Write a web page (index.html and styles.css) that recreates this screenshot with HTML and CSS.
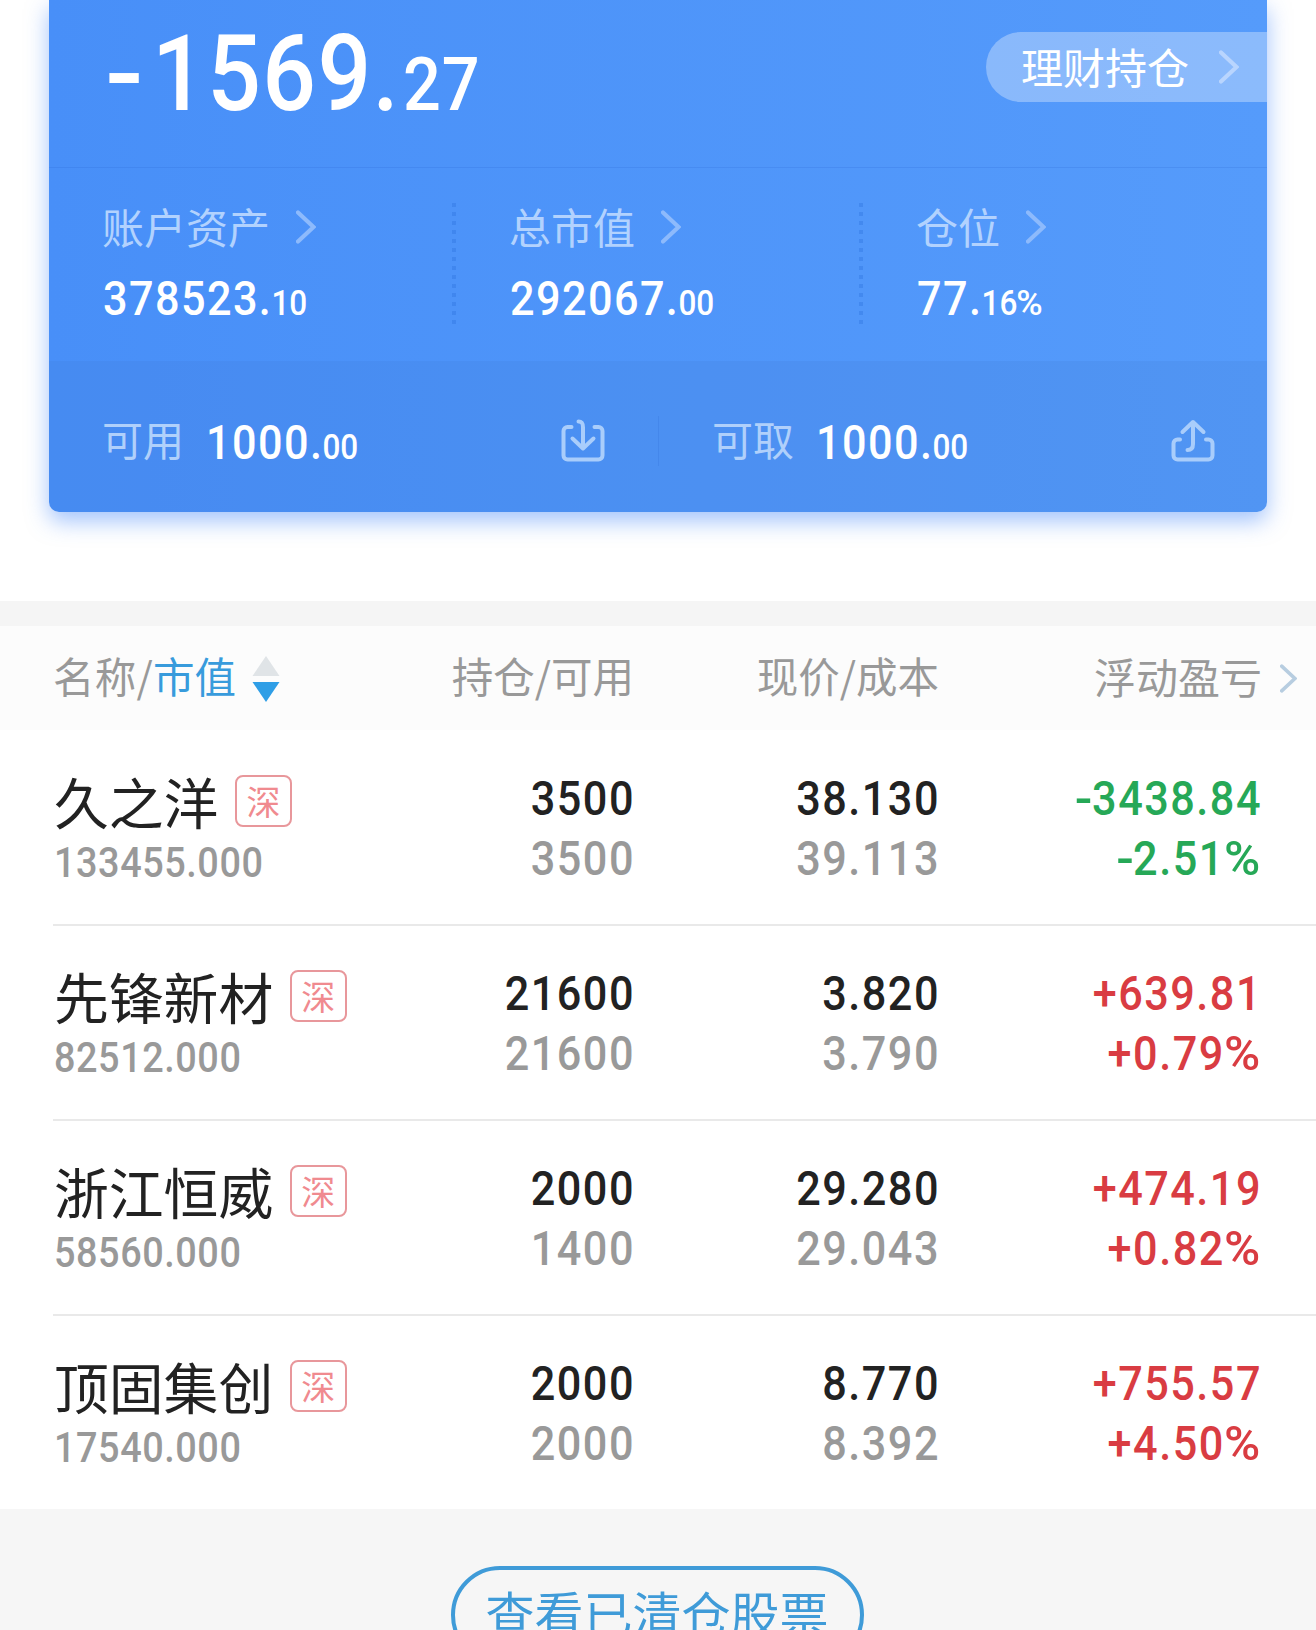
FILE: index.html
```html
<!DOCTYPE html>
<html lang="zh-CN">
<head>
<meta charset="utf-8">
<title>持仓</title>
<link rel="stylesheet" href="styles.css">
</head>
<body>
<svg class="defs" aria-hidden="true">
  <symbol id="chev" viewBox="0 0 20 34"><path d="M2 2.500L17.500 17L2 31.500" fill="none" stroke="currentColor" stroke-width="4.200" stroke-linecap="round" stroke-linejoin="miter"/></symbol>
</svg>
<main class="page">
  <section class="card">
    <div class="profit">
      <div class="num big"><span class="sign">-</span>1569.<span class="dec">27</span></div>
      <a class="pill"><span>理财持仓</span><svg class="chev"><use href="#chev"/></svg></a>
    </div>
    <div class="stats">
      <div class="stat">
        <div class="label"><span>账户资产</span><svg class="chev"><use href="#chev"/></svg></div>
        <div class="num val">378523.<span class="dec">10</span></div>
      </div>
      <div class="stat dotted">
        <div class="label"><span>总市值</span><svg class="chev"><use href="#chev"/></svg></div>
        <div class="num val">292067.<span class="dec">00</span></div>
      </div>
      <div class="stat dotted">
        <div class="label"><span>仓位</span><svg class="chev"><use href="#chev"/></svg></div>
        <div class="num val">77.<span class="dec">16<span class="pct">%</span></span></div>
      </div>
    </div>
    <div class="cash">
      <div class="cash-item">
        <span class="cash-label">可用</span><span class="num val">1000.<span class="dec">00</span></span>
        <svg class="io" viewBox="0 0 44 44"><path d="M10.500 8H6.500a4 4 0 0 0-4 4V36.500a4 4 0 0 0 4 4H37.500a4 4 0 0 0 4-4V12a4 4 0 0 0-4-4H33.500M17.500 2.500c4 0 4.500 2.500 4.500 6V29M11.500 19.500L22 29.500L32.500 19.500"/></svg>
      </div>
      <div class="cash-item second">
        <span class="cash-label">可取</span><span class="num val">1000.<span class="dec">00</span></span>
        <svg class="io" viewBox="0 0 44 44"><path d="M9 20.500H6.500a4 4 0 0 0-4 4V36.500a4 4 0 0 0 4 4H37.500a4 4 0 0 0 4-4V24.500a4 4 0 0 0-4-4H35M16.500 31c4 0 5.500-2 5.500-6V3M11.500 13L22 3L32.500 13"/></svg>
      </div>
    </div>
  </section>

  <section class="holdings">
    <div class="head">
      <div class="h-name"><span>名称/<b>市值</b></span><svg class="sort" viewBox="0 0 28 46"><path d="M14 0L27.500 20H.5z" fill="#e0e4e7"/><path d="M14 46L27.500 26H.5z" fill="#2f9ee6"/></svg></div>
      <div class="h-col">持仓/可用</div>
      <div class="h-col">现价/成本</div>
      <div class="h-col last"><span>浮动盈亏</span><svg class="chev"><use href="#chev"/></svg></div>
    </div>
    <div class="row">
      <div class="name"><div class="title">久之洋<span class="tag">深</span></div><div class="num mv">133455.000</div></div>
      <div class="num col"><span>3500</span><span class="dim">3500</span></div>
      <div class="num col"><span>38.130</span><span class="dim">39.113</span></div>
      <div class="num col down"><span><span class="sign">-</span>3438.84</span><span><span class="sign">-</span>2.51<span class="pct">%</span></span></div>
    </div>
    <div class="row">
      <div class="name"><div class="title">先锋新材<span class="tag">深</span></div><div class="num mv">82512.000</div></div>
      <div class="num col"><span>21600</span><span class="dim">21600</span></div>
      <div class="num col"><span>3.820</span><span class="dim">3.790</span></div>
      <div class="num col up"><span>+639.81</span><span>+0.79<span class="pct">%</span></span></div>
    </div>
    <div class="row">
      <div class="name"><div class="title">浙江恒威<span class="tag">深</span></div><div class="num mv">58560.000</div></div>
      <div class="num col"><span>2000</span><span class="dim">1400</span></div>
      <div class="num col"><span>29.280</span><span class="dim">29.043</span></div>
      <div class="num col up"><span>+474.19</span><span>+0.82<span class="pct">%</span></span></div>
    </div>
    <div class="row">
      <div class="name"><div class="title">顶固集创<span class="tag">深</span></div><div class="num mv">17540.000</div></div>
      <div class="num col"><span>2000</span><span class="dim">2000</span></div>
      <div class="num col"><span>8.770</span><span class="dim">8.392</span></div>
      <div class="num col up"><span>+755.57</span><span>+4.50<span class="pct">%</span></span></div>
    </div>
  </section>
  <footer class="foot"><a class="cleared">查看已清仓股票</a></footer>
</main>
</body>
</html>
```
FILE: styles.css
```css
* { box-sizing: border-box; }
body { margin: 0; background: #fff; font-family: "Noto Sans CJK SC", sans-serif; }
.defs { display: none; }
.page { width: 1316px; height: 1630px; overflow: hidden; display: flex; flex-direction: column; }
/* narrow, openly spaced figures */
.num { font-family: Roboto, "Noto Sans CJK SC", sans-serif; font-weight: 500; white-space: nowrap; transform: scaleX(.9); transform-origin: 0 50%; }
.sign { display: inline-block; transform: scaleX(1.2); transform-origin: 0 50%; margin-right: .02em; }
.pct { display: inline-block; transform: scaleX(1.14); transform-origin: 100% 50%; margin-left: .09em; }
.chev { width: 20px; height: 34px; flex: none; }

.card {
  flex: none; width: 1218px; height: 512px; margin: 0 0 89px 49px;
  border-radius: 0 0 10px 10px; color: #fff;
  background: linear-gradient(90deg, #488ff8, #559bfb);
  box-shadow: 0 9px 22px rgba(70, 135, 250, .5);
}
.profit { height: 168px; border-bottom: 1px solid rgba(40, 100, 210, .2); display: flex; justify-content: space-between; padding-left: 56px; }
.big { font-size: 105px; line-height: 149px; letter-spacing: .015em; }
.big .sign { margin-right: 15px; }
.big .dec { font-size: 74px; letter-spacing: .015em; margin-left: 3px; }
.pill {
  margin-top: 32px; width: 281px; height: 70px; padding: 0 28px 0 35px;
  border-radius: 35px 0 0 35px; background: rgba(255, 255, 255, .32);
  display: flex; align-items: center; justify-content: space-between;
  font-size: 42px; line-height: 66px;
}
.pill span { padding-bottom: 2px; }
.pill .chev { color: #b9d5fe; }
.stats { height: 193px; display: grid; grid-template-columns: 403px 407px 1fr; }
.stat { padding: 35px 0 0 53px; }
.dotted { background: repeating-linear-gradient(180deg, rgba(35, 105, 215, .3) 0 4px, transparent 4px 9px) 0 35px / 4px 122px no-repeat; }
.stat.dotted { padding-left: 57px; }
.label { display: flex; align-items: center; gap: 26px; height: 47px; font-size: 42px; line-height: 42px; color: #b2d2fe; }
.label span { padding-bottom: 2px; }
.label .chev { color: #8dbafc; }
.val { font-size: 48px; line-height: 60px; letter-spacing: .033em; }
.stat .val { margin: 19px 0 0 1px; }
.val .dec { font-size: 35px; letter-spacing: 0; margin-left: -1px; }
.val .pct { margin-left: .06em; }
.cash { height: 151px; border-radius: 0 0 10px 10px; background: rgba(60, 120, 205, .16); display: grid; grid-template-columns: 1fr 1fr; align-items: center; padding-top: 8px; }
.cash-item { height: 50px; display: flex; align-items: center; padding: 0 53px 0 53px; }
.cash-item.second { border-left: 1px solid rgba(40, 100, 210, .2); padding-right: 52px; }
.cash-label { font-size: 41px; line-height: 41px; color: #b0d0fb; margin-right: 22px; padding-bottom: 4px; }
.cash .val { padding-top: 10px; }
.io { width: 44px; height: 44px; margin-left: auto; fill: none; stroke: #a9cdfb; stroke-width: 4; stroke-linecap: round; stroke-linejoin: round; }

.holdings { flex: none; border-top: 25px solid #f5f5f5; }
.head, .row { display: grid; grid-template-columns: 340px 294px 305px 322px 1fr; }
.head { height: 104px; margin-bottom: 1px; background: #fcfcfc; color: #999; font-size: 41.500px; line-height: 99px; }
.head b { font-weight: 400; color: #389bdc; }
.h-name { display: flex; align-items: center; gap: 16px; padding-left: 53px; white-space: nowrap; letter-spacing: .2px; }
.h-name span, .h-col span { padding-bottom: 7px; }
.sort { width: 28px; height: 46px; flex: none; }
.h-col { text-align: right; white-space: nowrap; }
.h-col.last { grid-column: 4 / 6; display: flex; align-items: center; gap: 18px; justify-content: flex-end; padding-right: 19px; font-size: 42px; }
.h-col.last .chev { width: 17px; height: 29px; color: #b7cde0; margin-bottom: 2px; }
.row { height: 195px; color: #222; background: linear-gradient(#e9e9e9, #e9e9e9) 53px 100% / 100% 2px no-repeat; }
.row:last-child { height: 193px; background: none; }
.name { padding: 34px 0 0 54px; white-space: nowrap; }
.title { display: flex; align-items: center; height: 66px; padding-top: 3px; font-size: 54.800px; line-height: 60px; }
.tag { flex: none; margin: 2px 0 0 16.500px; width: 57px; height: 52px; border: 2px solid #e8979b; border-radius: 8px; color: #f08a8f; font-size: 34px; line-height: 47px; text-align: center; }
.mv { font-size: 42px; line-height: 56px; margin-top: 4px; color: #999; letter-spacing: .015em; }
.col { display: flex; flex-direction: column; align-items: flex-end; margin-right: -1px; padding-top: 38px; font-size: 48px; line-height: 60px; letter-spacing: .035em; transform-origin: 100% 50%; }
.dim { color: #999; }
.down { color: #26a857; }
.up { color: #d93c42; }

.foot { flex: 1; background: #f6f6f6; display: flex; justify-content: center; padding: 57px 2px 0 0; }
.cleared { width: 413px; height: 98px; border: 4px solid #3f9bd8; border-radius: 49px; color: #3f9bd8; font-size: 49px; line-height: 83px; text-align: center; white-space: nowrap; }
```
